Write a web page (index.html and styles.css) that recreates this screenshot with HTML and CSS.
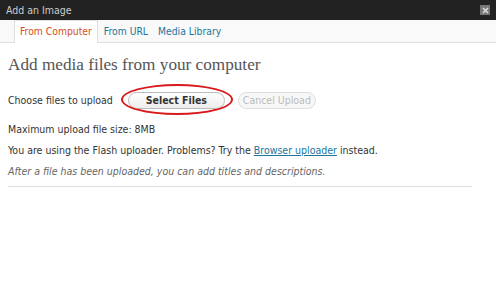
FILE: index.html
```html
<!DOCTYPE html>
<html>
<head>
<meta charset="utf-8">
<link rel="stylesheet" href="styles.css">
</head>
<body>
<div class="titlebar">
  <span class="title">Add an Image</span>
  <span class="close"><svg width="9" height="9" viewBox="0 0 9 9"><path d="M2 2L7 7M7 2L2 7" stroke="#ddd" stroke-width="1.6"/></svg></span>
</div>
<div class="tabs">
  <span class="tab active">From Computer</span>
  <span class="tab">From URL</span>
  <span class="tab">Media Library</span>
</div>
<div class="content">
  <h3 class="heading">Add media files from your computer</h3>
  <div class="choose">
    <span>Choose files to upload</span>
    <span class="select-wrap">
      <span class="btn primary">Select Files</span>
      <span class="ring"></span>
    </span>
    <span class="btn disabled">Cancel Upload</span>
  </div>
  <p class="line">Maximum upload file size: 8MB</p>
  <p class="line">You are using the Flash uploader. Problems? Try the <a href="#">Browser uploader</a> instead.</p>
  <p class="line note">After a file has been uploaded, you can add titles and descriptions.</p>
  <hr class="rule">
</div>
</body>
</html>
```
FILE: styles.css
```css
html, body {
  margin: 0;
  padding: 0;
  background: #fff;
  width: 496px;
  height: 302px;
  overflow: hidden;
  font-family: "DejaVu Sans Condensed", "DejaVu Sans", sans-serif;
  font-size: 10.5px;
  color: #333;
}
.titlebar {
  height: 20px;
  background: #222;
  display: flex;
  align-items: center;
  justify-content: space-between;
  padding: 0 6px;
}
.title {
  color: #ccc;
  font-size: 10.5px;
}
.close {
  width: 10px;
  height: 10px;
  background: #777;
  display: flex;
  align-items: center;
  justify-content: center;
}
.tabs {
  height: 22px;
  background: #f9f9f9;
  border-bottom: 1px solid #dfdfdf;
  display: flex;
  align-items: flex-end;
  padding-left: 14px;
}
.tab {
  height: 21px;
  line-height: 21px;
  padding: 0 4px;
  margin-right: 2px;
  color: #21759b;
  font-size: 10.3px;
  box-sizing: border-box;
}
.tab.active {
  background: #fff;
  color: #d54e21;
  border: 1px solid #dfdfdf;
  border-bottom: none;
  height: 23px;
  margin-bottom: -1px;
  line-height: 21px;
  padding: 0 5px;
}
.content {
  padding: 0 24px 0 8px;
}
.heading {
  margin: 12px 0 0;
  font-family: "Liberation Serif", "Times New Roman", serif;
  font-weight: normal;
  font-size: 17.2px;
  color: #555;
  height: 26px;
}
.choose {
  display: flex;
  align-items: center;
  margin-top: 10px;
  height: 18px;
}
.select-wrap {
  position: relative;
  margin-left: 15px;
  display: inline-flex;
}
.btn {
  display: inline-block;
  height: 17px;
  line-height: 15px;
  box-sizing: border-box;
  border: 1px solid #bbb;
  border-radius: 9px;
  text-align: center;
  font-size: 10.5px;
  background: linear-gradient(#fff, #ededed);
}
.btn.primary {
  width: 97px;
  font-weight: bold;
  color: #333;
}
.btn.disabled {
  width: 78px;
  margin-left: 13px;
  color: #bbb;
  border-color: #ddd;
  background: #f7f7f7;
}
.ring {
  position: absolute;
  left: -7px;
  top: -8px;
  width: 112px;
  height: 31px;
  border: 2px solid #d9191c;
  border-radius: 50%;
  box-sizing: border-box;
}
.line {
  margin: 0;
  height: 21px;
  line-height: 21px;
}
.choose + .line {
  margin-top: 10px;
}
.line a {
  color: #21759b;
}
.note {
  font-style: italic;
  color: #666;
}
.rule {
  margin: 4px 0 0;
  border: none;
  border-top: 1px solid #dfdfdf;
  width: 464px;
}
```
